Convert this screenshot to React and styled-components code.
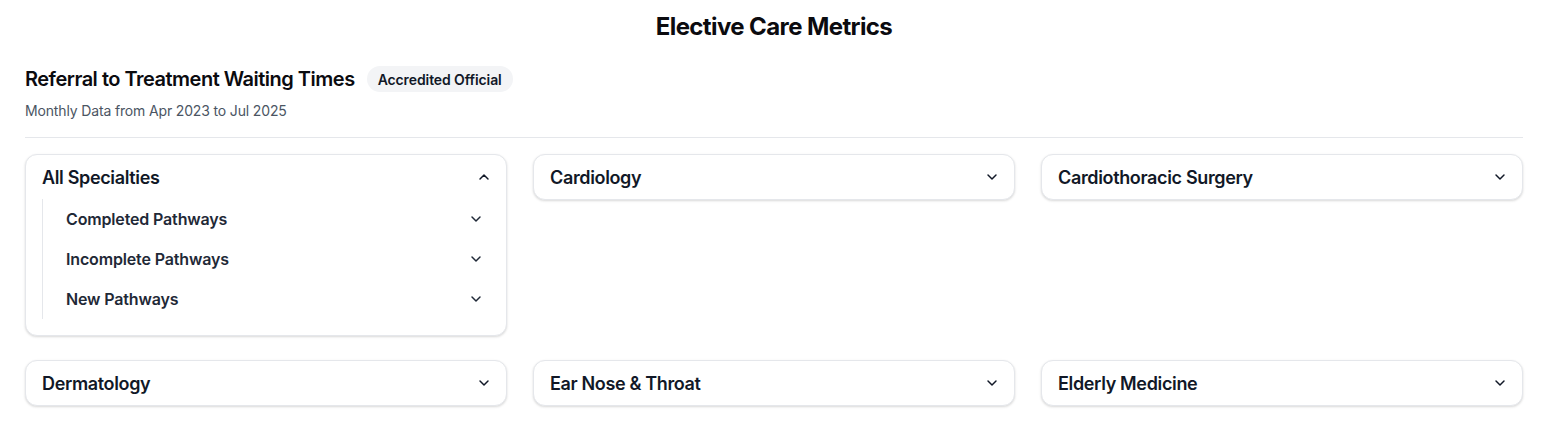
import React, { useState } from "react";
import styled, { createGlobalStyle } from "styled-components";

const GlobalStyle = createGlobalStyle`
  * { box-sizing: border-box; }
  body {
    margin: 0;
    background: #ffffff;
    font-family: Inter, "Noto Sans", sans-serif;
    color: #111827;
    -webkit-font-smoothing: antialiased;
  }
`;

const specialties = [
  "All Specialties",
  "Cardiology",
  "Cardiothoracic Surgery",
  "Dermatology",
  "Ear Nose & Throat",
  "Elderly Medicine",
];

const pathways = ["Completed Pathways", "Incomplete Pathways", "New Pathways"];

function Chevron({ up }) {
  return (
    <svg width="16" height="16" viewBox="0 0 24 24" fill="none" stroke="currentColor" strokeWidth="2.2" strokeLinecap="round" strokeLinejoin="round">
      {up ? <path d="m18 15-6-6-6 6" /> : <path d="m6 9 6 6 6-6" />}
    </svg>
  );
}

function SpecialtyCard({ name, defaultOpen }) {
  const [open, setOpen] = useState(defaultOpen);
  return (
    <Card>
      <CardHeader onClick={() => setOpen(!open)}>
        <span>{name}</span>
        <Chevron up={open} />
      </CardHeader>
      {open && (
        <SubList>
          {pathways.map((p) => (
            <SubItem key={p}>
              <span>{p}</span>
              <Chevron />
            </SubItem>
          ))}
        </SubList>
      )}
    </Card>
  );
}

export default function App() {
  return (
    <>
      <GlobalStyle />
      <Page>
        <Title>Elective Care Metrics</Title>
        <SectionRow>
          <SectionTitle>Referral to Treatment Waiting Times</SectionTitle>
          <Badge>Accredited Official</Badge>
        </SectionRow>
        <Subtitle>Monthly Data from Apr 2023 to Jul 2025</Subtitle>
        <Divider />
        <Grid>
          {specialties.map((s, i) => (
            <SpecialtyCard key={s} name={s} defaultOpen={i === 0} />
          ))}
        </Grid>
      </Page>
    </>
  );
}

const Page = styled.div`
  padding: 11px 25px 24px;
`;

const Title = styled.h1`
  margin: 0;
  text-align: center;
  font-size: 24px;
  line-height: 32px;
  font-weight: 700;
  letter-spacing: -0.6px;
  color: #0b0b0f;
`;

const SectionRow = styled.div`
  display: flex;
  align-items: center;
  gap: 12px;
  margin-top: 22px;
  height: 28px;
`;

const SectionTitle = styled.h2`
  margin: 0;
  font-size: 20px;
  line-height: 28px;
  font-weight: 600;
  letter-spacing: -0.5px;
  color: #0b0b0f;
`;

const Badge = styled.span`
  display: inline-flex;
  align-items: center;
  height: 26px;
  padding: 0 11px;
  border-radius: 9999px;
  background: #f3f4f6;
  font-size: 14px;
  font-weight: 600;
  letter-spacing: -0.1px;
  color: #111827;
`;

const Subtitle = styled.p`
  margin: 8px 0 0;
  font-size: 14px;
  line-height: 20px;
  letter-spacing: -0.15px;
  color: #4b5563;
`;

const Divider = styled.hr`
  margin: 16px 0 16px;
  border: 0;
  border-top: 1px solid #e5e7eb;
`;

const Grid = styled.div`
  display: grid;
  grid-template-columns: repeat(3, 1fr);
  column-gap: 26px;
  row-gap: 24px;
  align-items: start;
`;

const Card = styled.div`
  border: 1px solid #e5e7eb;
  border-radius: 12px;
  background: #fff;
  box-shadow: 0 1px 3px rgba(0, 0, 0, 0.1), 0 1px 2px rgba(0, 0, 0, 0.06);
  overflow: hidden;
`;

const CardHeader = styled.div`
  display: flex;
  align-items: center;
  justify-content: space-between;
  height: 44px;
  padding: 0 14px 0 16px;
  font-size: 18px;
  font-weight: 600;
  letter-spacing: -0.35px;
  color: #111827;
  cursor: pointer;
`;

const SubList = styled.div`
  margin: 0 8px 16px 16px;
  border-left: 1px solid #e5e7eb;
  padding-left: 23px;
`;

const SubItem = styled.div`
  display: flex;
  align-items: center;
  justify-content: space-between;
  height: 40px;
  padding-right: 14px;
  font-size: 16px;
  font-weight: 600;
  letter-spacing: -0.15px;
  color: #1f2937;
  cursor: pointer;
`;
